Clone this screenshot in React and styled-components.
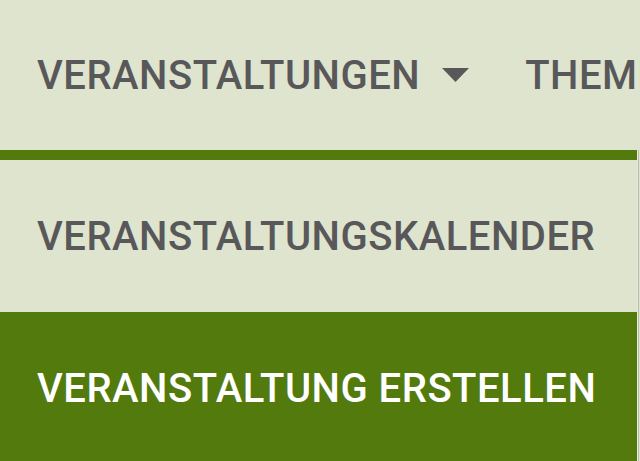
import React from 'react';
import styled, { createGlobalStyle } from 'styled-components';

const GlobalStyle = createGlobalStyle`
  html, body {
    margin: 0;
    padding: 0;
    background: #dee4cd;
    overflow: hidden;
  }
  body {
    font-family: Roboto, "Liberation Sans", sans-serif;
  }
`;

const Page = styled.div`
  width: 640px;
  height: 461px;
  overflow: hidden;
`;

const NavBar = styled.nav`
  height: 150px;
  display: flex;
  align-items: center;
  padding-left: 37px;
  white-space: nowrap;
  overflow: hidden;
`;

const NavItem = styled.div`
  display: flex;
  align-items: center;
  gap: 22px;
  margin-right: ${props => props.gap || 0}px;
  font-size: 40px;
  font-weight: 500;
  letter-spacing: 0.5px;
  color: #58585a;
  text-transform: uppercase;
`;

const Caret = styled.svg`
  width: 27px;
  height: 14px;
  flex-shrink: 0;
`;

const Dropdown = styled.ul`
  list-style: none;
  margin: 0;
  padding: 0;
  width: 637px;
  border-top: 10px solid #537a0d;
  box-shadow: 1px 0 0 #e6eada, 2px 0 0 #b9bdb1;
`;

const DropItem = styled.li`
  height: 152px;
  display: flex;
  align-items: center;
  padding-left: 37px;
  font-size: 40px;
  font-weight: 500;
  letter-spacing: 0.5px;
  white-space: nowrap;
  background: ${props => props.active ? '#537a0d' : '#dee4cd'};
  color: ${props => props.active ? '#ffffff' : '#58585a'};
`;

const App = () => {
  return (
    <Page>
      <GlobalStyle />
      <NavBar>
        <NavItem gap={56}>
          VERANSTALTUNGEN
          <Caret viewBox="0 0 27 14">
            <polygon points="0,0 27,0 13.5,14" fill="#58585a" />
          </Caret>
        </NavItem>
        <NavItem>THEMEN</NavItem>
      </NavBar>
      <Dropdown>
        <DropItem>VERANSTALTUNGSKALENDER</DropItem>
        <DropItem active>VERANSTALTUNG ERSTELLEN</DropItem>
      </Dropdown>
    </Page>
  );
};

export default App;
